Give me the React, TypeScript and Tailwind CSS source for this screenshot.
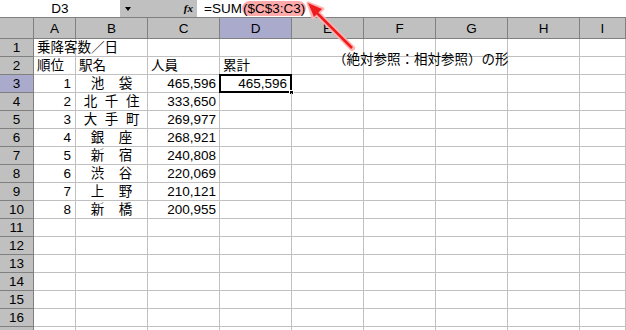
import React from "react";

const cols = ["A", "B", "C", "D", "E", "F", "G", "H", "I"];
const widths = ["w-[42px]", "w-[72px]", "w-[72px]", "w-[72px]", "w-[72px]", "w-[72px]", "w-[72px]", "w-[72px]", "flex-1"];

const data: { rank: string; name: string; count: string }[] = [
  { rank: "1", name: "池袋", count: "465,596" },
  { rank: "2", name: "北千住", count: "333,650" },
  { rank: "3", name: "大手町", count: "269,977" },
  { rank: "4", name: "銀座", count: "268,921" },
  { rank: "5", name: "新宿", count: "240,808" },
  { rank: "6", name: "渋谷", count: "220,069" },
  { rank: "7", name: "上野", count: "210,121" },
  { rank: "8", name: "新橋", count: "200,955" },
];

const Spread = ({ text }: { text: string }) => (
  <div className="flex justify-evenly w-full">
    {text.split("").map((c, i) => (
      <span key={i}>{c}</span>
    ))}
  </div>
);

const App = () => {
  const cell = (r: number, c: number): React.ReactNode => {
    if (r === 1 && c === 0) return <span className="pl-[3px] whitespace-nowrap">乗降客数／日</span>;
    if (r === 2) {
      const h = ["順位", "駅名", "人員", "累計"][c];
      return h ? <span className="pl-[3px]">{h}</span> : null;
    }
    const d = data[r - 3];
    if (!d) return null;
    if (c === 0) return <span className="ml-auto pr-[4px]">{d.rank}</span>;
    if (c === 1) return <Spread text={d.name} />;
    if (c === 2) return <span className="ml-auto pr-[3px]">{d.count}</span>;
    if (c === 3 && r === 3) return <span className="ml-auto pr-[4px]">465,596</span>;
    return null;
  };

  return (
    <div
      className="relative w-[626px] h-[330px] overflow-hidden bg-white text-black text-[13.5px] leading-[17px]"
      style={{ fontFamily: '"Liberation Sans", "Noto Sans CJK JP", sans-serif' }}
    >
      {/* formula bar */}
      <div className="flex h-[18px] border-b border-[#808080]">
        <div className="w-[120px] flex items-center justify-center">D3</div>
        <div className="w-[77px] bg-[#c0c0c0] flex items-center">
          <div className="ml-[5px] w-0 h-0 border-l-[3.5px] border-r-[3.5px] border-t-[4px] border-l-transparent border-r-transparent border-t-black" />
          <span className="ml-auto mr-[4px] italic font-bold text-[11px]" style={{ fontFamily: '"Liberation Serif", serif' }}>
            fx
          </span>
        </div>
        <div className="flex-1 flex items-center pl-[7px]">
          <span>=SUM</span>
          <span className="bg-[#ffaaaa] rounded-full px-[1px] leading-[15px]">($C$3:C3)</span>
        </div>
      </div>

      {/* column headers */}
      <div className="flex h-[21px] bg-[#c0c0c0] border-b border-[#808080]">
        <div className="w-[34px] border-r border-[#808080]" />
        {cols.map((c, i) => (
          <div
            key={c}
            className={`${widths[i]} flex items-center justify-center border-r border-[#808080] ${c === "D" ? "bg-[#aaaacc]" : ""}`}
          >
            {c}
          </div>
        ))}
      </div>

      {/* rows */}
      {Array.from({ length: 17 }, (_, k) => k + 1).map((r) => (
        <div key={r} className="flex h-[18px] border-b border-[#c0c0c0]">
          <div
            className={`w-[34px] flex items-center justify-center border-r border-[#808080] -mb-px border-b ${
              r === 3 ? "bg-[#aaaacc]" : "bg-[#c0c0c0]"
            } border-b-[#808080]`}
          >
            {r < 17 ? r : ""}
          </div>
          {cols.map((c, i) => (
            <div key={c} className={`${widths[i]} flex items-center border-r border-[#c0c0c0] relative`}>
              {cell(r, i)}
              {r === 3 && c === "D" && (
                <>
                  <div className="absolute -left-[1px] -top-[1px] -right-[1px] -bottom-[1px] border-2 border-black" />
                  <div className="absolute -right-[3px] -bottom-[3px] w-[5px] h-[5px] bg-black border border-white" />
                </>
              )}
            </div>
          ))}
        </div>
      ))}

      {/* annotation */}
      <div className="absolute left-[333px] top-[53px] whitespace-nowrap leading-[14px]">（絶対参照：相対参照）の形</div>
      <svg className="absolute left-[300px] top-0" width="64" height="56" viewBox="0 0 64 56">
        <line x1="52" y1="48" x2="12" y2="8" stroke="#ffb4b4" strokeWidth="6" strokeLinecap="round" />
        <polygon points="8,3 23,9 13,18" fill="#ffb4b4" stroke="#ffb4b4" strokeWidth="3" strokeLinejoin="round" />
        <line x1="52" y1="48" x2="14" y2="10" stroke="#ee1c1c" strokeWidth="2.5" />
        <polygon points="8,3 22,9 14,17" fill="#ee1c1c" />
      </svg>
    </div>
  );
};

export default App;
